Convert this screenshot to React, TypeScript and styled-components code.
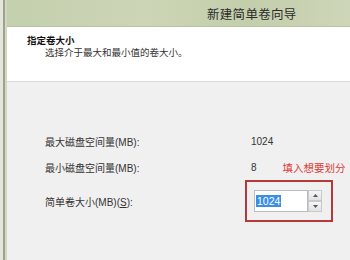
import { FC } from "react";
import styled, { createGlobalStyle } from "styled-components";

const GlobalStyle = createGlobalStyle`
  html, body {
    margin: 0;
    padding: 0;
    background: #f0f0f0;
  }
  body {
    font-family: "Liberation Sans", "Noto Sans CJK SC", sans-serif;
    color: #1e1e1e;
  }
`;

const Window = styled.div`
  display: flex;
  width: 350px;
  height: 260px;
  overflow: hidden;
`;

const FrameEdge = styled.div`
  flex: 0 0 7px;
  background: linear-gradient(
    to right,
    #e4e5dc 0 3px,
    #9ea489 3px 5px,
    #d3d6c8 5px 7px
  );
`;

const Main = styled.div`
  flex: 1;
  display: flex;
  flex-direction: column;
`;

const TitleBar = styled.div`
  height: 26px;
  display: flex;
  align-items: center;
  padding-left: 200px;
  background: linear-gradient(
    to right,
    #c4cfae 0%,
    #ccd6b6 40%,
    #c3ceab 70%,
    #cdd6b8 100%
  );
  border-bottom: 1px solid #b9c2a4;
`;

const TitleText = styled.span`
  font-family: "Noto Sans CJK SC", sans-serif;
  font-size: 12.5px;
  color: #2b2b2b;
  letter-spacing: 0.3px;
`;

const Header = styled.div`
  height: 55px;
  background: #ffffff;
  padding: 7px 0 0 20px;
  box-sizing: border-box;
  border-bottom: 1px solid #d9d9d9;
`;

const HeaderTitle = styled.div`
  font-family: "Noto Sans CJK SC", sans-serif;
  font-size: 9.5px;
  font-weight: bold;
  line-height: 12px;
  color: #111;
`;

const HeaderSub = styled.div`
  font-family: "Noto Sans CJK SC", sans-serif;
  font-size: 9.5px;
  line-height: 12px;
  padding-left: 18px;
  color: #333;
`;

const Body = styled.div`
  flex: 1;
  background: #f0f0f0;
  padding: 46px 0 0 38px;
  display: flex;
  flex-direction: column;
`;

const Row = styled.div<{ tall?: boolean }>`
  display: flex;
  align-items: center;
  height: ${({ tall }) => (tall ? "42px" : "26px")};
`;

const Label = styled.div`
  width: 206px;
  font-size: 10px;
  color: #333;
`;

const Value = styled.div`
  font-size: 10px;
  color: #333;
  display: flex;
  align-items: center;
`;

const Note = styled.span`
  font-family: "Noto Sans CJK SC", sans-serif;
  font-size: 10.5px;
  color: #de3a36;
  margin-left: 26px;
  white-space: nowrap;
`;

const RedFrame = styled.div`
  margin-left: -6px;
  width: 88px;
  height: 42px;
  box-sizing: border-box;
  border: 2px solid #b5383a;
  padding: 8px 0 0 7px;
  display: flex;
`;

const InputBox = styled.div`
  width: 54px;
  height: 22px;
  box-sizing: border-box;
  background: #fff;
  border: 1px solid #b7bcc6;
  display: flex;
  align-items: center;
  padding-left: 1px;
`;

const Selected = styled.span`
  background: #3a8ee6;
  color: #fff;
  font-size: 10.5px;
  line-height: 12px;
  padding: 0 1px;
`;

const Spinner = styled.div`
  width: 14px;
  height: 22px;
  display: flex;
  flex-direction: column;
`;

const SpinButton = styled.div`
  flex: 1;
  box-sizing: border-box;
  border: 1px solid #c9c9c9;
  background: linear-gradient(#f6f6f6, #e2e2e2);
  display: flex;
  align-items: center;
  justify-content: center;
`;

const Arrow: FC<{ up?: boolean }> = ({ up }) => (
  <svg width="5" height="3" viewBox="0 0 5 3">
    <path d={up ? "M0 3 L2.5 0 L5 3 Z" : "M0 0 L2.5 3 L5 0 Z"} fill="#555" />
  </svg>
);

const App: FC = () => {
  return (
    <>
      <GlobalStyle />
      <Window>
        <FrameEdge />
        <Main>
          <TitleBar>
            <TitleText>新建简单卷向导</TitleText>
          </TitleBar>
          <Header>
            <HeaderTitle>指定卷大小</HeaderTitle>
            <HeaderSub>选择介于最大和最小值的卷大小。</HeaderSub>
          </Header>
          <Body>
            <Row>
              <Label>最大磁盘空间量(MB):</Label>
              <Value>1024</Value>
            </Row>
            <Row>
              <Label>最小磁盘空间量(MB):</Label>
              <Value>
                8<Note>填入想要划分</Note>
              </Value>
            </Row>
            <Row tall>
              <Label>
                简单卷大小(MB)(<u>S</u>):
              </Label>
              <RedFrame>
                <InputBox>
                  <Selected>1024</Selected>
                </InputBox>
                <Spinner>
                  <SpinButton>
                    <Arrow up />
                  </SpinButton>
                  <SpinButton>
                    <Arrow />
                  </SpinButton>
                </Spinner>
              </RedFrame>
            </Row>
          </Body>
        </Main>
      </Window>
    </>
  );
};

export default App;
